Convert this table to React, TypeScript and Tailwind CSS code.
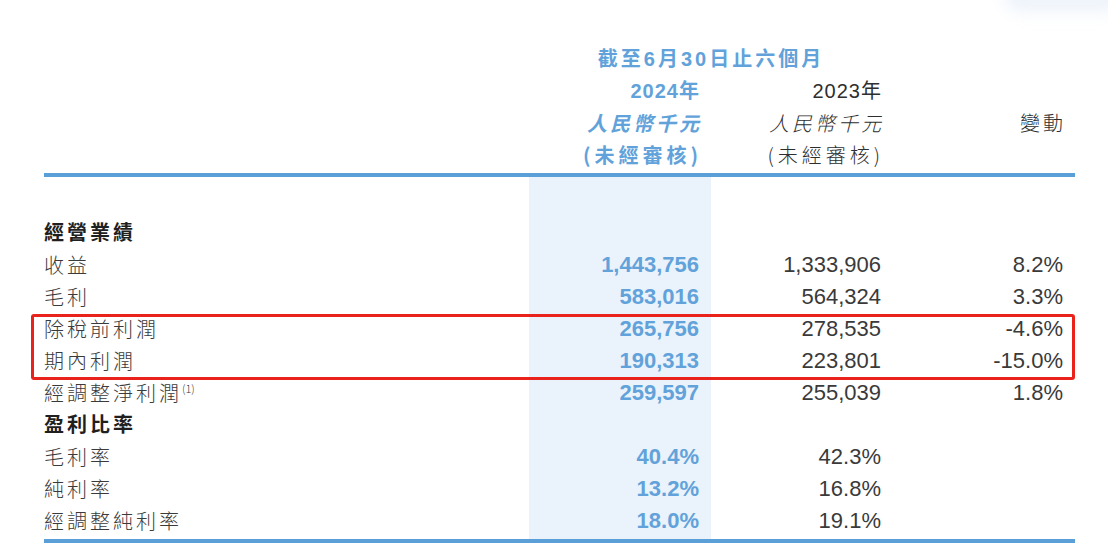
import React from "react";

const cjk = "font-['Noto_Sans_CJK_TC','Noto_Sans_CJK_SC',sans-serif]";
const num = "font-['Liberation_Sans','Noto_Sans_CJK_TC',sans-serif]";

type Row = {
  label: string;
  note?: string;
  bold?: boolean;
  cur?: string;
  prev?: string;
  change?: string;
};

const ROWS: Row[] = [
  { label: "經營業績", bold: true },
  { label: "收益", cur: "1,443,756", prev: "1,333,906", change: "8.2%" },
  { label: "毛利", cur: "583,016", prev: "564,324", change: "3.3%" },
];

const BOXED: Row[] = [
  { label: "除稅前利潤", cur: "265,756", prev: "278,535", change: "-4.6%" },
  { label: "期內利潤", cur: "190,313", prev: "223,801", change: "-15.0%" },
];

const REST: Row[] = [
  { label: "經調整淨利潤", note: "(1)", cur: "259,597", prev: "255,039", change: "1.8%" },
  { label: "盈利比率", bold: true },
  { label: "毛利率", cur: "40.4%", prev: "42.3%" },
  { label: "純利率", cur: "13.2%", prev: "16.8%" },
  { label: "經調整純利率", cur: "18.0%", prev: "19.1%" },
];

const GRID = "grid grid-cols-[485px_182px_182px_182px]";

function TableRow({ row }: { row: Row }) {
  return (
    <div className={`${GRID} h-8`}>
      <div
        className={`${cjk} flex items-center text-[20px] tracking-[3px] ${
          row.bold ? "font-bold text-[#1f1f1f]" : "font-light text-[#3a3a3a]"
        }`}
      >
        {row.label}
        {row.note && (
          <span className="-mt-2 text-[11px] tracking-normal">{row.note}</span>
        )}
      </div>
      <div
        className={`${num} flex items-center justify-end bg-[#eaf2fb] pr-3 text-[22px] font-bold text-[#62a2da]`}
      >
        {row.cur}
      </div>
      <div
        className={`${num} flex items-center justify-end pr-3 text-[22px] text-[#3a3a3a]`}
      >
        {row.prev}
      </div>
      <div
        className={`${num} flex items-center justify-end pr-3 text-[22px] text-[#3a3a3a]`}
      >
        {row.change}
      </div>
    </div>
  );
}

function Spacer({ h }: { h: string }) {
  return (
    <div className={`${GRID} ${h}`}>
      <div />
      <div className="bg-[#eaf2fb]" />
      <div />
      <div />
    </div>
  );
}

export default function App() {
  return (
    <div className="relative h-[556px] w-[1108px] overflow-hidden bg-white">
      <div className="absolute -right-4 -top-5 h-[32px] w-[120px] rounded-full bg-[#e3ecf8] opacity-60 blur-[8px]" />

      <div className="ml-[44px] w-[1031px] pt-[43px]">
        {/* header */}
        <div className={`${GRID} h-8`}>
          <div />
          <div
            className={`${num} col-span-2 flex items-center justify-center text-[20px] font-bold tracking-[3px] text-[#62a2da]`}
          >
            截至6月30日止六個月
          </div>
        </div>
        <div className={`${GRID} h-8`}>
          <div />
          <div
            className={`${num} flex items-center justify-end pr-[12px] text-[20px] font-bold tracking-[1px] text-[#62a2da]`}
          >
            <span className="-mr-[1px]">2024年</span>
          </div>
          <div
            className={`${num} flex items-center justify-end pr-3 text-[20px] tracking-[1px] text-[#2e2e2e]`}
          >
            <span className="-mr-[1px]">2023年</span>
          </div>
        </div>
        <div className={`${GRID} h-8`}>
          <div />
          <div
            className={`${cjk} flex items-center justify-end pr-3 text-[20px] font-bold italic tracking-[3px] text-[#62a2da]`}
          >
            <span className="-mr-[3px]">人民幣千元</span>
          </div>
          <div
            className={`${cjk} flex items-center justify-end pr-3 text-[20px] font-light italic tracking-[3px] text-[#2e2e2e]`}
          >
            <span className="-mr-[3px]">人民幣千元</span>
          </div>
          <div
            className={`${cjk} flex items-center justify-end pr-3 text-[20px] font-light tracking-[3px] text-[#2e2e2e]`}
          >
            <span className="-mr-[3px]">變動</span>
          </div>
        </div>
        <div className={`${GRID} h-8`}>
          <div />
          <div
            className={`${cjk} flex items-center justify-end pr-3 text-[20px] font-bold tracking-[4px] text-[#62a2da]`}
          >
            <span className="-mr-[3px]">(未經審核)</span>
          </div>
          <div
            className={`${cjk} flex items-center justify-end pr-3 text-[20px] font-light tracking-[4px] text-[#2e2e2e]`}
          >
            <span className="-mr-[3px]">(未經審核)</span>
          </div>
        </div>

        <div className="mt-[2px] h-1 bg-[#5b9fd8]" />

        {/* body */}
        <Spacer h="h-[39px]" />
        {ROWS.map((r) => (
          <TableRow key={r.label} row={r} />
        ))}
        <div className="relative">
          {BOXED.map((r) => (
            <TableRow key={r.label} row={r} />
          ))}
          <div className="pointer-events-none absolute -bottom-1 -left-[13px] right-0 top-[2px] rounded-[3px] border-[3px] border-[#e9221c]" />
        </div>
        {REST.map((r) => (
          <TableRow key={r.label} row={r} />
        ))}
        <Spacer h="h-[3px]" />
        <div className="h-1 bg-[#5b9fd8]" />
      </div>
    </div>
  );
}
